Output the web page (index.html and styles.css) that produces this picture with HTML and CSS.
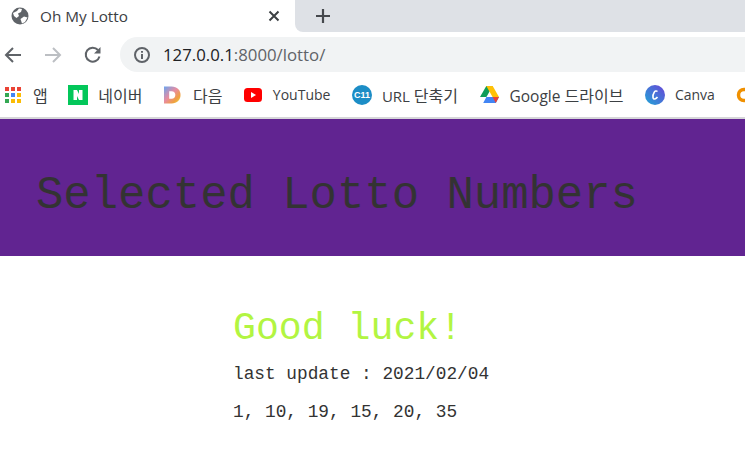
FILE: index.html
```html
<!DOCTYPE html>
<html lang="ko">
<head>
    <meta charset="UTF-8">
    <meta name="viewport" content="width=device-width, initial-scale=1.0">
    <title>Oh My Lotto</title>
    <link rel="stylesheet" href="styles.css">
</head>
<body>
    <div class="tabstrip">
        <div class="tab">
            <svg class="favicon" width="18" height="18" viewBox="0 0 18 18">
                <circle cx="9" cy="9" r="8.5" fill="#5f6368"/>
                <path d="M2 6 L6 4 L8 1.5 L11 2 L10 5 L7 6.5 L8 9 L5.5 11 L3 9 Z" fill="#fff"/>
                <path d="M9.5 12 L13 9.5 L16.5 10.5 L14 15 L11 16.5 Z" fill="#fff"/>
            </svg>
            <span class="tab-title">Oh My Lotto</span>
            <svg class="tab-close" width="12" height="12" viewBox="0 0 12 12">
                <path d="M1.5 1.5 L10.5 10.5 M10.5 1.5 L1.5 10.5" stroke="#3c4043" stroke-width="2"/>
            </svg>
        </div>
        <div class="tab-rest">
            <svg class="tab-new" width="16" height="16" viewBox="0 0 16 16">
                <path d="M8 1 V15 M1 8 H15" stroke="#45484d" stroke-width="2.2"/>
            </svg>
        </div>
    </div>

    <div class="toolbar">
        <svg class="nav-icon" width="18" height="18" viewBox="0 0 18 18">
            <path d="M17 9 H2 M9 2 L2 9 L9 16" fill="none" stroke="#5f6368" stroke-width="2"/>
        </svg>
        <svg class="nav-icon" width="18" height="18" viewBox="0 0 18 18">
            <path d="M1 9 H16 M9 2 L16 9 L9 16" fill="none" stroke="#bcbfc3" stroke-width="2"/>
        </svg>
        <svg class="nav-icon" width="18" height="18" viewBox="0 0 18 18">
            <path d="M15.5 10.5 A7 7 0 1 1 14 4" fill="none" stroke="#5f6368" stroke-width="2"/>
            <path d="M16.5 1 V7.5 H10 Z" fill="#5f6368"/>
        </svg>
        <div class="omnibox">
            <svg class="info-icon" width="16" height="16" viewBox="0 0 16 16">
                <circle cx="8" cy="8" r="7" fill="none" stroke="#5f6368" stroke-width="2"/>
                <path d="M8 7 V12 M8 4 V5.8" stroke="#5f6368" stroke-width="2"/>
            </svg>
            <span class="url"><span class="url-host">127.0.0.1</span>:8000/lotto/</span>
        </div>
    </div>

    <div class="bookmarks">
        <div class="bookmark bm-apps">
            <svg width="16" height="16" viewBox="0 0 16 16">
                <rect x="0" y="0" width="4" height="4" fill="#ea4335"/>
                <rect x="6" y="0" width="4" height="4" fill="#ea4335"/>
                <rect x="12" y="0" width="4" height="4" fill="#ea4335"/>
                <rect x="0" y="6" width="4" height="4" fill="#34a853"/>
                <rect x="6" y="6" width="4" height="4" fill="#4285f4"/>
                <rect x="12" y="6" width="4" height="4" fill="#fbbc04"/>
                <rect x="0" y="12" width="4" height="4" fill="#34a853"/>
                <rect x="6" y="12" width="4" height="4" fill="#fbbc04"/>
                <rect x="12" y="12" width="4" height="4" fill="#fbbc04"/>
            </svg>
            <span class="ko">앱</span>
        </div>
        <div class="bookmark">
            <svg width="20" height="20" viewBox="0 0 20 20">
                <rect width="20" height="20" fill="#03c75a"/>
                <path d="M5.5 5 H9 L11 9 V5 H14.5 V15 H11 L9 11 V15 H5.5 Z" fill="#fff"/>
            </svg>
            <span class="ko">네이버</span>
        </div>
        <div class="bookmark bm-daum">
            <svg width="17" height="20" viewBox="0 0 18 20">
                <defs>
                    <linearGradient id="daum" x1="0" y1="0" x2="1" y2="1">
                        <stop offset="0" stop-color="#6aa5f0"/>
                        <stop offset="0.45" stop-color="#e88ca0"/>
                        <stop offset="0.75" stop-color="#f0a040"/>
                        <stop offset="1" stop-color="#e6e04a"/>
                    </linearGradient>
                </defs>
                <path d="M0 1 H8 C14 1 17.500 5 17.500 10 C17.500 15 14 19 8 19 H0 Z" fill="url(#daum)"/>
                <path d="M5.500 6 H8 C10.500 6 12 7.500 12 10 C12 12.500 10.500 14 8 14 H5.500 Z" fill="#fff"/>
            </svg>
            <span class="ko">다음</span>
        </div>
        <div class="bookmark bm-youtube">
            <svg width="18" height="14" viewBox="0 0 18 14">
                <rect width="18" height="14" rx="3.500" fill="#f00"/>
                <path d="M7 4 L12 7 L7 10 Z" fill="#fff"/>
            </svg>
            <span>YouTube</span>
        </div>
        <div class="bookmark">
            <svg width="20" height="20" viewBox="0 0 20 20">
                <circle cx="10" cy="10" r="10" fill="#1c8dc6"/>
                <text x="10" y="13" class="c11">C11</text>
            </svg>
            <span class="bm-url">URL <span class="ko">단축기</span></span>
        </div>
        <div class="bookmark bm-drive">
            <svg width="19" height="17" viewBox="0 0 19 17">
                <path d="M6.300 0 H12.700 L6.400 11 H0 Z" fill="#0f9d58"/>
                <path d="M6.300 0 H12.700 L19 11 H12.600 Z" fill="#ffc107"/>
                <path d="M3.200 17 L6.400 11 H19 L15.800 17 Z" fill="#4285f4"/>
                <path d="M15.800 17 L12.600 11 H19 Z" fill="#ea4335"/>
            </svg>
            <span>Google <span class="ko">드라이브</span></span>
        </div>
        <div class="bookmark">
            <svg width="20" height="20" viewBox="0 0 20 20">
                <defs>
                    <linearGradient id="canva" x1="0" y1="1" x2="1" y2="0">
                        <stop offset="0" stop-color="#1fa6d6"/>
                        <stop offset="1" stop-color="#6a45d8"/>
                    </linearGradient>
                </defs>
                <circle cx="10" cy="10" r="10" fill="url(#canva)"/>
                <path d="M12.500 6.500 C10 4.500 7.500 9 8 12.500 C8.500 15 11 14 12.500 12" fill="none" stroke="#fff" stroke-width="1.600"/>
            </svg>
            <span>Canva</span>
        </div>
        <div class="bookmark">
            <svg width="16" height="16" viewBox="0 0 16 16">
                <circle cx="8" cy="8" r="5.500" fill="none" stroke="#f09000" stroke-width="3.500"/>
            </svg>
        </div>
    </div>

    <header class="banner">
        <h1>Selected Lotto Numbers</h1>
    </header>

    <main class="content">
        <h2>Good luck!</h2>
        <p class="update">last update : 2021/02/04</p>
        <p class="numbers">1, 10, 19, 15, 20, 35</p>
    </main>
</body>
</html>
```

FILE: styles.css
```css
html, body {
    margin: 0;
    padding: 0;
    height: 462px;
    overflow: hidden;
    background: white;
}
body {
    font-family: 'Liberation Mono', monospace;
}

/* browser chrome */
.tabstrip {
    display: flex;
    height: 32px;
    font-family: 'Open Sans', 'Noto Sans CJK KR', sans-serif;
}
.tab {
    display: flex;
    align-items: center;
    width: 295px;
    padding-left: 11px;
    box-sizing: border-box;
    background: white;
}
.favicon {
    flex: none;
}
.tab-title {
    margin-left: 11px;
    font-size: 15.300px;
    color: #3c4043;
}
.tab-close {
    margin-left: auto;
    margin-right: 15px;
}
.tab-rest {
    flex: 1;
    display: flex;
    align-items: center;
    padding-left: 20px;
    background: #dee1e6;
    border-bottom-left-radius: 8px;
}
.toolbar {
    display: flex;
    align-items: center;
    height: 35px;
    margin-top: 5px;
    padding-left: 4px;
    font-family: 'Open Sans', sans-serif;
}
.nav-icon {
    flex: none;
    margin-right: 22px;
}
.nav-icon:nth-child(3) {
    margin-right: 18px;
}
.omnibox {
    flex: 1;
    display: flex;
    align-items: center;
    height: 35px;
    padding-left: 14px;
    background: #f1f3f4;
    border-radius: 18px 0 0 18px;
}
.url {
    margin-left: 13px;
    font-size: 16.800px;
    color: #5f6368;
}
.url-host {
    color: #202124;
}
.bookmarks {
    display: flex;
    align-items: center;
    gap: 21.500px;
    height: 45px;
    padding-left: 5px;
    overflow: hidden;
    font-family: 'Open Sans', 'Noto Sans CJK KR', sans-serif;
    font-size: 14px;
    color: #3c4043;
    border-bottom: 2px solid #d6d6d9;
}
.bookmark {
    display: flex;
    align-items: center;
    flex: none;
    gap: 10px;
}
.bm-apps {
    gap: 12px;
    margin-right: -1px;
}
.bm-daum {
    gap: 12px;
}
.bm-youtube {
    gap: 11px;
}
.bm-url {
    font-size: 15px;
}
.bm-drive {
    gap: 11px;
    font-size: 15.500px;
}
.ko {
    font-size: 16px;
}
.c11 {
    font-family: 'Liberation Sans', sans-serif;
    font-size: 9px;
    font-weight: 700;
    fill: white;
    text-anchor: middle;
}

/* page */
.banner {
    display: flex;
    align-items: center;
    height: 121px;
    padding: 16px 0 0 36px;
    background: #612491;
}
h1 {
    margin: 0;
    font-size: 45.600px;
    font-weight: 400;
    color: #333;
}
.content {
    padding: 51px 0 0 233px;
}
h2 {
    margin: 0;
    font-size: 38.200px;
    font-weight: 400;
    line-height: 44px;
    color: #b2f542;
}
.update,
.numbers {
    margin: 0;
    font-size: 17.800px;
    line-height: 22px;
    color: #333;
}
.update {
    margin-top: 12px;
}
.numbers {
    margin-top: 16px;
}
```
